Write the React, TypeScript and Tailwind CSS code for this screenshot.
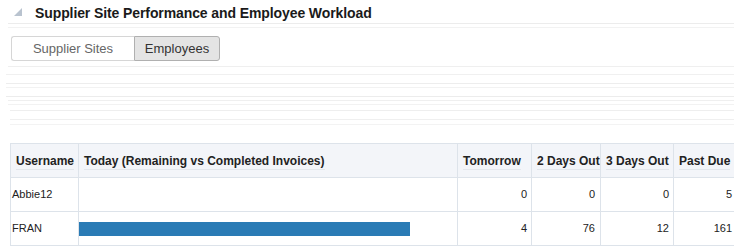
import React from "react";

const ROWS = [
    { user: "Abbie12", today: 0, tomorrow: 0, two: 0, three: 0, pastDue: 5 },
    { user: "FRAN", today: 331, tomorrow: 4, two: 76, three: 12, pastDue: 161 },
];

const HEADERS = [
    { label: "Username", w: "w-[68px]" },
    { label: "Today (Remaining vs Completed Invoices)", w: "w-[379px]" },
    { label: "Tomorrow", w: "w-[74px]" },
    { label: "2 Days Out", w: "w-[69px]" },
    { label: "3 Days Out", w: "w-[73px]" },
    { label: "Past Due", w: "w-[71px]" },
];

// faint leftover rule lines between sections
function Rule({ className }: { className: string }) {
    return <div className={"h-px bg-[#ececec] " + className} />;
}

export default function App() {
    return (
        <div className="w-[734px] h-[247px] bg-white overflow-hidden text-[#333] font-['Liberation_Sans',Arial,sans-serif]">
            {/* Title */}
            <div className="flex items-center h-[22px] pt-[4px] pl-[14px]">
                <svg width="8" height="8" viewBox="0 0 8 8" className="mr-[13px] mt-[-2px]">
                    <polygon points="8,0 8,8 0,8" fill="#b9c3cf" />
                </svg>
                <h2 className="text-[14px] font-bold text-[#1a1a1a] leading-none tracking-[-0.1px]">
                    Supplier Site Performance and Employee Workload
                </h2>
            </div>
            <Rule className="mt-[1px] ml-[8px]" />
            <Rule className="mt-[3px] ml-[8px] bg-[#f2f2f2]" />

            {/* Tabs */}
            <div className="flex pl-[11px] mt-[8px]">
                <div className="flex h-[25px] text-[13px]">
                    <button className="w-[123px] bg-white text-[#666] border border-r-0 border-[#d6d6d6] rounded-l-[3px] flex items-center justify-center">
                        Supplier Sites
                    </button>
                    <button className="w-[86px] bg-[#e4e4e4] text-[#333] border border-[#b0b0b0] rounded-r-[3px] flex items-center justify-center">
                        Employees
                    </button>
                </div>
            </div>

            {/* leftover lines */}
            <div className="mt-[5px]">
                <Rule className="ml-[8px] bg-[#efefef]" />
                <Rule className="mt-[7px] ml-[6px] h-[2px] bg-[#f0f0f0]" />
                <Rule className="mt-[8px] ml-[6px] bg-[#ededed]" />
                <Rule className="mt-[3px] ml-[6px] bg-[#f2f2f2]" />
                <Rule className="mt-[8px] ml-[6px] h-[2px] bg-[#ececec]" />
                <Rule className="mt-[3px] ml-[8px] bg-[#efefef]" />
                <Rule className="mt-[3px] ml-[8px] bg-[#f2f2f2]" />
                <Rule className="mt-[5px] ml-[10px] bg-[#eeeeee]" />
                <Rule className="mt-[8px] ml-[10px] bg-[#efefef]" />
                <Rule className="mt-[4px] ml-[10px] bg-[#f3f3f3]" />
            </div>

            {/* Table */}
            <div className="pl-[10px] mt-[18px]">
                <table className="w-[734px] table-fixed border-collapse text-[11px]">
                    <thead>
                        <tr className="h-[34px] bg-[#f3f5f9]">
                            {HEADERS.map((h) => (
                                <th
                                    key={h.label}
                                    className={"border border-[#dde3ea] text-left font-bold text-[12px] text-[#222] pl-[5px] pr-0 align-middle whitespace-nowrap overflow-hidden " + h.w}
                                >
                                    <span className="border-b border-[#e3e7ec] pb-[1px]">{h.label}</span>
                                </th>
                            ))}
                        </tr>
                    </thead>
                    <tbody>
                        {ROWS.map((r) => (
                            <tr key={r.user} className="h-[34px]">
                                <td className="border border-[#dde3ea] px-[1px] text-[#222]">{r.user}</td>
                                <td className="border border-[#dde3ea] p-0">
                                    {r.today > 0 && (
                                        <div className="h-[14px] mt-[1px] bg-[#2a7bb5]" style={{ width: r.today }} />
                                    )}
                                </td>
                                <td className="border border-[#dde3ea] text-right pr-[4px] text-[#222]">{r.tomorrow}</td>
                                <td className="border border-[#dde3ea] text-right pr-[5px] text-[#222]">{r.two}</td>
                                <td className="border border-[#dde3ea] text-right pr-[4px] text-[#222]">{r.three}</td>
                                <td className="border border-[#dde3ea] text-right pr-[12px] text-[#222]">{r.pastDue}</td>
                            </tr>
                        ))}
                    </tbody>
                </table>
            </div>
        </div>
    );
}
